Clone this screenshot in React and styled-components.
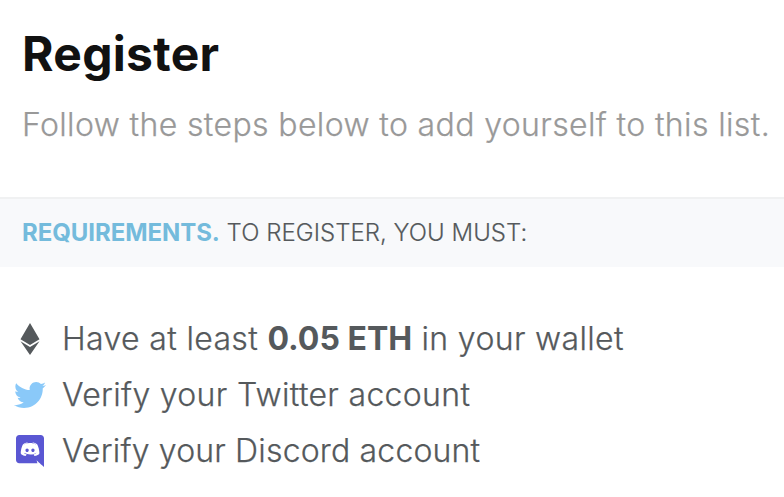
import styled, { createGlobalStyle } from "styled-components"
import { FaEthereum, FaTwitter } from "react-icons/fa"

const GlobalStyle = createGlobalStyle`
body {
  margin: 0;
  background-color: #fff;
  font-family: "Inter", sans-serif;
  overflow: hidden;
}
`;

const Container = styled.main`
width: 100%;
color: #55595c;
`;

const Header = styled.header`
height: 197px;
padding: 24px 0 0 22px;
box-sizing: border-box;
`;

const Title = styled.h1`
margin: 0;
font-size: 48px;
line-height: 60px;
font-weight: 700;
letter-spacing: 0.3px;
color: #111;
`;

const Subtitle = styled.p`
margin: 17px 0 0;
font-size: 32px;
line-height: 48px;
font-weight: 300;
letter-spacing: 0.37px;
-webkit-text-stroke: 0.25px currentColor;
white-space: nowrap;
color: #999;
`;

const Banner = styled.div`
height: 70px;
padding: 0 22px 2px;
box-sizing: border-box;
border-top: 2px solid #f0f1f2;
background-color: #f8f9fb;
display: flex;
align-items: center;
font-size: 24px;
font-weight: 300;
letter-spacing: 0.03px;
-webkit-text-stroke: 0.15px currentColor;
text-transform: uppercase;
white-space: pre;

strong {
  font-weight: 700;
  letter-spacing: -0.06px;
  -webkit-text-stroke: 0;
  color: #74bbdc;
}
`;

const List = styled.ul`
list-style: none;
margin: 0;
padding: 44px 0 0 14px;
`;

const Item = styled.li`
height: 56px;
display: flex;
align-items: center;
gap: 16px;
font-size: 32px;
font-weight: 300;
white-space: nowrap;

strong {
  font-weight: 700;
  letter-spacing: 0;
  -webkit-text-stroke: 0;
}
`;

const Label = styled.span`
padding-bottom: 2px;
letter-spacing: ${(props) => props.$spacing || "0.32px"};
-webkit-text-stroke: 0.25px currentColor;
`;

const Icon = styled.span`
width: 32px;
height: 32px;
flex-shrink: 0;
display: flex;
color: ${(props) => props.$color};
`;

const DiscordIcon = () => (
  <svg width="32" height="32" viewBox="0 0 448 512" fill="currentColor">
    <path d="M297.216 243.2c0 15.616-11.52 28.416-26.112 28.416-14.336 0-26.112-12.8-26.112-28.416s11.52-28.416 26.112-28.416c14.592 0 26.112 12.8 26.112 28.416zm-119.552-28.416c-14.592 0-26.112 12.8-26.112 28.416s11.776 28.416 26.112 28.416c14.592 0 26.112-12.8 26.112-28.416.256-15.616-11.52-28.416-26.112-28.416zM448 52.736V512c-64.494-56.994-43.868-38.128-118.784-107.776l13.568 47.36H52.48C23.552 451.584 0 428.032 0 398.848V52.736C0 23.552 23.552 0 52.48 0h343.04C424.448 0 448 23.552 448 52.736zm-72.96 242.688c0-82.432-36.864-149.248-36.864-149.248-36.864-27.648-71.936-26.88-71.936-26.88l-3.584 4.096c43.52 13.312 63.744 32.512 63.744 32.512-60.811-33.329-132.244-33.335-191.232-7.424-9.472 4.352-15.104 7.424-15.104 7.424s21.248-20.224 67.328-33.536l-2.56-3.072s-35.072-.768-71.936 26.88c0 0-36.864 66.816-36.864 149.248 0 0 21.504 37.12 78.08 38.912 0 0 9.472-11.52 17.152-21.248-32.512-9.728-44.8-30.208-44.8-30.208 3.766 2.636 9.976 6.053 10.496 6.4 43.21 24.198 104.588 32.126 159.744 8.96 8.96-3.328 18.944-8.192 29.44-15.104 0 0-12.8 20.992-46.336 30.464 7.68 9.728 16.896 20.736 16.896 20.736 56.576-1.792 78.336-38.912 78.336-38.912z" />
  </svg>
);

export const Register = () => {
  return (
    <Container>
      <GlobalStyle />
      <Header>
        <Title>Register</Title>
        <Subtitle>Follow the steps below to add yourself to this list.</Subtitle>
      </Header>
      <Banner>
        <strong>Requirements.</strong>
        <span> To register, you must:</span>
      </Banner>
      <List>
        <Item>
          <Icon $color="#55595c"><FaEthereum size={32} /></Icon>
          <Label $spacing="0.35px">Have at least <strong>0.05 ETH</strong> in your wallet</Label>
        </Item>
        <Item>
          <Icon $color="#8ac9f9"><FaTwitter size={32} /></Icon>
          <Label>Verify your Twitter account</Label>
        </Item>
        <Item>
          <Icon $color="#5a57d3"><DiscordIcon /></Icon>
          <Label $spacing="0.17px">Verify your Discord account</Label>
        </Item>
      </List>
    </Container>
  )
}

export default Register
